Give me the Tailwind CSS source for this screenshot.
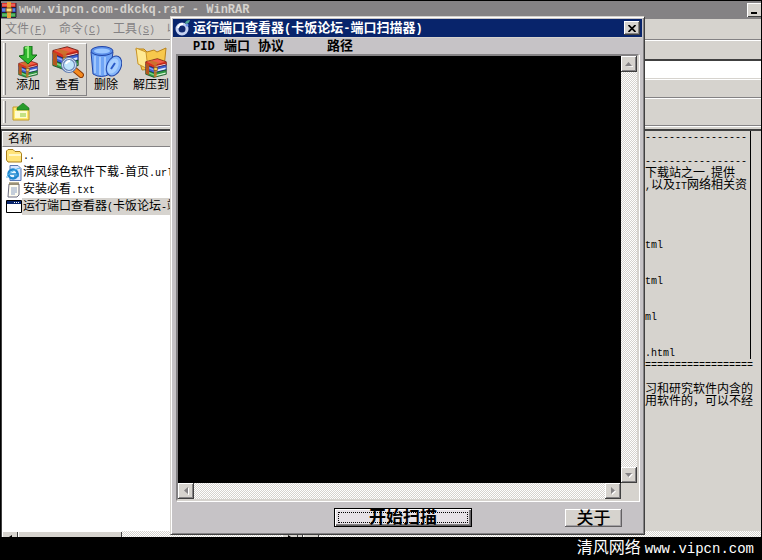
<!DOCTYPE html>
<html lang="zh-CN">
<head>
<meta charset="utf-8">
<title>WinRAR</title>
<script src="https://cdn.jsdelivr.net/npm/@tailwindcss/browser@4"></script>
</head>
<body class="relative flex h-screen flex-col overflow-hidden bg-black font-['Liberation_Mono','Noto_Sans_CJK_SC',monospace] text-[12px] leading-4 text-black">
<svg class="hidden" aria-hidden="true">
  <symbol id="books" viewBox="0 0 32 32" preserveAspectRatio="none">
    <path d="M1 6 18 1l13 5v5L13 16 1 11z" fill="#d8321f" stroke="#5a1510"/>
    <path d="M2 6 18 2l11 4-16 5z" fill="#f0604a"/>
    <path d="M13 12v4l18-5V7z" fill="#b8231c"/><path d="m15 14 15-4" stroke="#f3dcd4" stroke-width="1.500"/>
    <path d="m1 11 12 5 18-5v8l-18 5-12-5z" fill="#3d5fd2" stroke="#1b2468"/>
    <path d="m15 19 15-4v3l-15 4z" fill="#dfe8fb"/><path d="m2 14 11 5" stroke="#8aa8f4" stroke-width="2"/>
    <path d="m1 19 12 5 18-5v7l-18 5-12-5z" fill="#2f9a44" stroke="#0f4420"/>
    <path d="m15 27 15-4v2l-15 4z" fill="#dcf3d8"/><path d="m2 22 11 5" stroke="#80d487" stroke-width="2"/>
    <path d="m5 5 4-1 12 4-4 2v20l-4 1V12z" fill="#c8742a" fill-opacity=".85"/>
    <path d="M1 8 6 10v17l-5-2z" fill="#b4571f"/>
    <path d="M13 15h5v5h-5z" fill="#f5cf58" stroke="#7b4310"/>
  </symbol>
</svg>

<main class="mx-px mt-px flex min-h-0 flex-1 flex-col bg-[#d6d3ce]">
  <header class="flex h-[18px] shrink-0 items-center bg-[#848284] text-[#d6d3ce]">
    <svg class="h-4 w-4 shrink-0" viewBox="0 0 16 16">
      <path d="M0 1h15v5H0z" fill="#e0342b"/><path d="M0 6h15v5H0z" fill="#3a5fd6"/><path d="M0 11h15v4H0z" fill="#2f9e3f"/>
      <path d="M0 5.500h15M0 10.500h15M0 15.500h15M.5 1v14M15 1v14" stroke="#271b38" fill="none"/>
      <path d="M1 3h13M1 8h13M1 13h13" stroke="#fff" stroke-opacity=".45"/>
      <path d="M6 0h4v16H6z" fill="#e8a33a"/><path d="M5 6h6v4H5z" fill="#ffe27a" stroke="#7b4310"/>
    </svg>
    <h1 class="ml-[2px] flex-1 font-bold whitespace-nowrap">www.vipcn.com-dkckq.rar - WinRAR</h1>
    <button aria-label="最小化" class="flex h-[14px] w-[14px] items-end justify-center bg-[#d6d3ce] pb-[3px] shadow-[inset_1px_1px_#fff,inset_0_-1px_#404040]"><span class="h-[2px] w-[6px] bg-black"></span></button>
  </header>

  <nav class="flex h-[21px] shrink-0 items-center gap-3 border-b border-[#848284] pt-[2px] pl-1 text-[#848284]">
    <button class="w-[42px] text-left whitespace-nowrap">文件<span class="text-[10px]">(<u>F</u>)</span></button>
    <button class="w-[42px] text-left whitespace-nowrap">命令<span class="text-[10px]">(<u>C</u>)</span></button>
    <button class="w-[42px] text-left whitespace-nowrap">工具<span class="text-[10px]">(<u>S</u>)</span></button>
    <button aria-label="收藏夹" class="w-3 text-left">收</button>
  </nav>

  <div class="flex h-[58px] shrink-0 items-center border-t border-b border-t-white border-b-[#848284]">
    <span class="ml-[2px] h-[52px] w-[3px] border-r border-l border-r-[#848284] border-l-white"></span>
    <button class="ml-[3px] flex h-[53px] w-[38px] flex-col items-center pt-[3px]">
      <svg class="h-8 w-8 shrink-0" viewBox="0 0 32 32"><use href="#books" x="6" y="14" width="20" height="18"/><path d="M12 1 20 0v9h5l-9 9-9-8 5-1z" fill="#2fb52f" stroke="#126b16"/><path d="m13 2 3-1v11" fill="none" stroke="#8deb78" stroke-width="2"/></svg>
      <span class="leading-4">添加</span>
    </button>
    <button class="ml-px flex h-[53px] w-[39px] flex-col items-center border border-t-white border-r-[#848284] border-b-[#848284] border-l-white pt-[2px]">
      <svg class="h-8 w-8 shrink-0" viewBox="0 0 32 32"><use href="#books" x="0" y="0" width="27" height="24"/><path d="m23 24 6 5" stroke="#8b3a08" stroke-width="6" stroke-linecap="round"/><path d="m23 24 6 5" stroke="#f48a20" stroke-width="4" stroke-linecap="round"/><circle cx="17" cy="19" r="6.500" fill="#bfe4fb" stroke="#6680b4" stroke-width="3"/><circle cx="17" cy="19" r="6.500" fill="none" stroke="#dfe9f7"/><path d="M14 18q1-3 4-3" stroke="#fff" stroke-width="2" fill="none"/></svg>
      <span class="leading-4">查看</span>
    </button>
    <button class="flex h-[53px] w-[38px] flex-col items-center pt-[3px]">
      <svg class="h-8 w-8 shrink-0" viewBox="0 0 32 32"><path d="m1 6 2 22q8 5 17 0l3-22z" fill="#6fa4f5" stroke="#2145a8"/><path d="M5 10v17M10 11v18M15 11v18" stroke="#a0c6fc" stroke-width="2"/><ellipse cx="12" cy="5" rx="11" ry="4.500" fill="#5c90ea" stroke="#2145a8"/><ellipse cx="12" cy="5" rx="8" ry="2.500" fill="#9cc7ff"/><ellipse cx="24" cy="20" rx="7" ry="10.500" transform="rotate(25 24 20)" fill="#84b6fb" stroke="#2145a8"/><ellipse cx="23" cy="20" rx="5" ry="8" transform="rotate(25 23 20)" fill="#a9d0ff"/><path d="m21 23 4-6" stroke="#2a5bc8" stroke-width="2"/></svg>
      <span class="leading-4">删除</span>
    </button>
    <button class="ml-1 flex h-[53px] w-11 flex-col items-center pt-[3px]">
      <svg class="h-8 w-8 shrink-0" viewBox="0 0 32 32"><path d="M1 3h8l3 3 7-2 3 2 9-4-2 20-22 2z" fill="#f7c84c" stroke="#b9821b"/><path d="m1 2 10 4 2 17-10-5z" fill="#ffe992" stroke="#c9952a"/><use href="#books" x="10" y="12" width="22" height="20"/></svg>
      <span class="leading-4 whitespace-nowrap">解压到</span>
    </button>
    <input aria-label="地址" class="ml-4 h-[21px] min-w-0 flex-1 border-t-2 border-b border-t-[#404040] border-b-white bg-white shadow-[inset_0_-1px_#d6d3ce] outline-none">
  </div>

  <div class="flex h-[28px] shrink-0 items-center border-t border-b border-t-white border-b-[#848284]">
    <span class="ml-[2px] h-[22px] w-[3px] border-r border-l border-r-[#848284] border-l-white"></span>
    <button aria-label="向上" class="ml-[6px] flex h-5 w-5 items-center">
      <svg class="h-[18px] w-[18px]" viewBox="0 0 18 18"><path d="M1 4h5l2 2h8l1 1v10H1z" fill="#ffe96e" stroke="#c29a28"/><path d="M3 8h12v7H3z" fill="#fffbd0"/><path d="m11 0 6 5v2H5V5z" fill="#279c2b" stroke="#176b1b" stroke-width=".6"/><path d="M8 10h6v4H8z" fill="#c3e283"/></svg>
    </button>
  </div>
  <div class="h-[5px] shrink-0 border-t border-b-2 border-t-white border-b-[#404040]"></div>

  <div class="flex min-h-0 flex-1">
    <section class="flex w-[297px] shrink-0 flex-col border-l border-[#404040] bg-white">
      <div class="min-h-0 flex-1 overflow-hidden">
        <table class="w-full table-fixed border-collapse">
          <thead><tr><th class="h-4 p-0 text-left font-normal"><div class="h-4 border-t border-b border-l border-t-white border-b-[#848284] border-l-white bg-[#d6d3ce] pl-[5px] leading-4">名称</div></th></tr></thead>
          <tbody>
            <tr><td class="h-[17px] p-0"><div class="flex h-[17px] items-center pl-1"><svg class="h-4 w-4 shrink-0" viewBox="0 0 16 16"><path d="M.5 3 2 1.500h5l2 2h5l1.500 2V14H2L.5 12z" fill="#ffe47a" stroke="#a87f1b"/><path d="M3 7h12" stroke="#fff8c8" stroke-width="2"/></svg><span class="ml-px flex-1 pt-[2px] text-[10px] leading-[15px]">..</span></div></td></tr>
            <tr><td class="h-[17px] p-0"><div class="flex h-[17px] items-center pl-1"><svg class="h-4 w-4 shrink-0" viewBox="0 0 16 16"><path d="M4 .5h8l3 3v12H4z" fill="#d8e6ff" stroke="#5878b4"/><circle cx="7" cy="9" r="4.500" fill="#e9f6ff" stroke="#1d86cf" stroke-width="2.500"/><path d="M4 9h8v2H8" fill="#e9f6ff" stroke="#1d86cf" stroke-width="1.500"/><path d="M1 13Q0 10 7 6t7-2" fill="none" stroke="#4cb3ea"/></svg><span class="ml-px pt-[2px] leading-[15px] whitespace-nowrap">清风绿色软件下载<span class="text-[10px]">-</span>首页<span class="text-[10px]">.url</span></span></div></td></tr>
            <tr><td class="h-[17px] p-0"><div class="flex h-[17px] items-center pl-1"><svg class="h-4 w-4 shrink-0" viewBox="0 0 16 16"><path d="M3 2h10v11l-2 2H2z" fill="#fffdf1" stroke="#6d6d80"/><path d="M4 0v3M6 0v3M8 0v3M10 0v3M12 0v3" stroke="#7c6c35"/><path d="M5 6h6M5 8h6M5 10h6M5 12h4" stroke="#8ba0c4"/></svg><span class="ml-px pt-[2px] leading-[15px] whitespace-nowrap">安装必看<span class="text-[10px]">.txt</span></span></div></td></tr>
            <tr><td class="h-[17px] p-0"><div class="flex h-[17px] items-center pl-1"><svg class="h-4 w-4 shrink-0" viewBox="0 0 16 16"><path d="M.5 1.500h15v12H.5z" fill="#fff" stroke="#000"/><path d="M1 2h14v3H1z" fill="#08246b"/><path d="M8 3.500h1M10 3.500h1M12 3.500h1" stroke="#fff"/></svg><span class="h-[17px] flex-1 overflow-hidden bg-[#d6d3ce] pt-[2px] pl-px leading-[15px] whitespace-nowrap">运行端口查看器<span class="text-[10px]">(</span>卡饭论坛<span class="text-[10px]">-</span>端口扫描器<span class="text-[10px]">).exe</span></span></div></td></tr>
          </tbody>
        </table>
      </div>
      <div class="flex h-[6px] shrink-0 overflow-hidden bg-[repeating-conic-gradient(#fff_0_25%,#d6d3ce_0_50%)] bg-[length:2px_2px]">
        <button aria-label="向左" class="flex w-4 items-end justify-center bg-[#d6d3ce] shadow-[inset_1px_1px_#fff,inset_-1px_0_#404040]"><svg class="h-[2px] w-[4px]" viewBox="0 0 4 2"><path d="M4 0v2H1z"/></svg></button>
        <span class="w-[104px] bg-[#d6d3ce] shadow-[inset_1px_1px_#fff,inset_-1px_0_#404040]"></span>
        <button aria-label="向右" class="ml-auto flex w-4 items-end justify-center bg-[#d6d3ce] shadow-[inset_1px_1px_#fff,inset_-1px_0_#404040]"><svg class="h-[2px] w-[4px]" viewBox="0 0 4 2"><path d="M0 0v2h3z"/></svg></button>
      </div>
    </section>
    <section class="ml-[4px] flex min-w-0 flex-1 flex-col border-l border-[#404040]">
      <div class="min-h-0 flex-1 overflow-hidden pl-[342px] leading-[14px] whitespace-nowrap">
        <div class="w-[106px] border-r border-black">
          <div class="h-3 text-[10px]">-----------------</div>
          <div class="h-3"></div>
          <div class="h-3 text-[10px]">-----------------</div>
          <div class="h-3">下载站之一<span class="text-[10px]">,</span>提供</div>
          <div class="h-3"><span class="text-[10px]">,</span>以及<span class="text-[10px]">IT</span>网络相关资</div>
          <div class="h-12"></div>
          <div class="h-3 text-[10px]">tml</div>
          <div class="h-6"></div>
          <div class="h-3 text-[10px]">tml</div>
          <div class="h-6"></div>
          <div class="h-3 text-[10px]">ml</div>
          <div class="h-6"></div>
          <div class="h-3 text-[10px]">.html</div>
        </div>
        <div class="h-3 text-[10px]">==================</div>
        <div class="h-3"></div>
        <div class="h-3">习和研究软件内含的</div>
        <div class="h-3">用软件的，可以不经</div>
      </div>
      <div class="flex h-[6px] shrink-0 bg-[repeating-conic-gradient(#fff_0_25%,#d6d3ce_0_50%)] bg-[length:2px_2px]">
        <button aria-label="评论向左" class="w-4 bg-[#d6d3ce] shadow-[inset_1px_1px_#fff,inset_-1px_0_#404040]"></button>
      </div>
    </section>
  </div>
</main>

<footer class="flex h-[23px] shrink-0 items-center justify-end gap-1 pr-2 leading-5 text-white">
  <span class="text-[16px]">清风网络</span><span class="text-[14px]">www.vipcn.com</span>
</footer>

<section role="dialog" aria-labelledby="dlg" class="absolute top-4 right-[117px] bottom-[25px] left-[170px] flex flex-col border border-t-[#d6d3ce] border-r-[#404040] border-b-[#404040] border-l-[#d6d3ce] bg-[#c6c3c6] p-[2px] shadow-[inset_1px_1px_#fff,inset_-1px_-1px_#848284]">
  <header class="flex h-[18px] shrink-0 items-center bg-[#08246b] pr-[2px] pl-[2px] text-white">
    <svg class="h-4 w-4 shrink-0" viewBox="0 0 16 16"><circle cx="7" cy="9" r="5" fill="#122a70" stroke="#c5d2f2" stroke-width="3"/><path d="M3 8q1-4 5-4" stroke="#fff" stroke-width="2" fill="none"/><path d="M10 3q1-3 5-3-1 4-4 4z" fill="#52a894"/><circle cx="12" cy="5" r="1.500" fill="#6f91e8"/></svg>
    <h2 id="dlg" class="ml-[2px] flex-1 pt-[2px] text-[13px] font-bold whitespace-nowrap">运行端口查看器<span class="text-[12px]">(</span>卡饭论坛<span class="text-[12px]">-</span>端口扫描器<span class="text-[12px]">)</span></h2>
    <button aria-label="关闭" class="flex h-[14px] w-4 items-center justify-center bg-[#d6d3ce] shadow-[inset_-1px_-1px_#404040,inset_1px_1px_#fff,inset_-2px_-2px_#848284]"><svg class="h-[7px] w-2" viewBox="0 0 8 7"><path d="m.5 0 7 7m0-7-7 7" stroke="#000" stroke-width="1.700"/></svg></button>
  </header>
  <div class="flex h-[17px] shrink-0 items-center border-t border-[#d6d3ce] pt-[2px] pl-5 text-[13px] font-bold whitespace-nowrap">
    <span class="w-[31px] text-[12px]">PID</span><span class="w-[34px]">端口</span><label for="out" class="w-[69px]">协议</label><span>路径</span>
  </div>
  <div class="mx-[3px] flex min-h-0 flex-1 flex-col border-2 border-t-[#848284] border-r-[#d6d3ce] border-b-[#d6d3ce] border-l-[#848284] shadow-[1px_1px_#fff]">
    <div class="flex min-h-0 flex-1">
      <textarea id="out" readonly class="min-w-0 flex-1 resize-none overflow-hidden bg-black text-white outline-none"></textarea>
      <div class="flex w-4 flex-col justify-between bg-[repeating-conic-gradient(#fff_0_25%,#d6d3ce_0_50%)] bg-[length:2px_2px]">
        <button aria-label="上滚" class="flex h-4 w-4 items-center justify-center bg-[#d6d3ce] shadow-[inset_-1px_-1px_#404040,inset_1px_1px_#fff,inset_-2px_-2px_#848284]"><svg class="h-[5px] w-2" viewBox="0 0 8 5"><path d="M1 5h7V4z" fill="#fff"/><path d="M0 4h7L3.500 0z" fill="#848284"/></svg></button>
        <button aria-label="下滚" class="flex h-4 w-4 items-center justify-center bg-[#d6d3ce] shadow-[inset_-1px_-1px_#404040,inset_1px_1px_#fff,inset_-2px_-2px_#848284]"><svg class="h-[5px] w-2" viewBox="0 0 8 5"><path d="M1 1h7L4.500 5z" fill="#fff"/><path d="M0 0h7L3.500 4z" fill="#848284"/></svg></button>
      </div>
    </div>
    <div class="flex h-4 shrink-0 bg-[#d6d3ce] pr-4">
      <div class="flex flex-1 justify-between bg-[repeating-conic-gradient(#fff_0_25%,#d6d3ce_0_50%)] bg-[length:2px_2px]">
        <button aria-label="左滚" class="flex h-4 w-4 items-center justify-center bg-[#d6d3ce] shadow-[inset_-1px_-1px_#404040,inset_1px_1px_#fff,inset_-2px_-2px_#848284]"><svg class="h-2 w-[5px]" viewBox="0 0 5 8"><path d="M4 1h1v7H4z" fill="#fff"/><path d="M4 0v7L0 3.500z" fill="#848284"/></svg></button>
        <button aria-label="右滚" class="flex h-4 w-4 items-center justify-center bg-[#d6d3ce] shadow-[inset_-1px_-1px_#404040,inset_1px_1px_#fff,inset_-2px_-2px_#848284]"><svg class="h-2 w-[5px]" viewBox="0 0 5 8"><path d="M1 1v7l4-3.500z" fill="#fff"/><path d="M0 0v7l4-3.500z" fill="#848284"/></svg></button>
      </div>
    </div>
  </div>
  <div class="flex h-[31px] shrink-0 items-center justify-between pt-[2px] pr-5 pl-[161px]">
    <button class="h-[19px] w-[138px] border border-black bg-[#e6e1e6] p-[3px] text-[17px] font-bold shadow-[inset_1px_1px_#fff,inset_-1px_-1px_#636163,inset_-2px_-2px_#848284]"><span class="flex h-[11px] items-center justify-center border border-dotted border-black pt-[2px] leading-none">开始扫描</span></button>
    <button class="flex h-[18px] w-[57px] items-center justify-center bg-[#d6d3ce] pt-[4px] text-[17px] leading-none font-medium shadow-[inset_-1px_-1px_#636163,inset_1px_1px_#fff,inset_-2px_-2px_#a5a2a5]">关于</button>
  </div>
</section>
</body>
</html>
